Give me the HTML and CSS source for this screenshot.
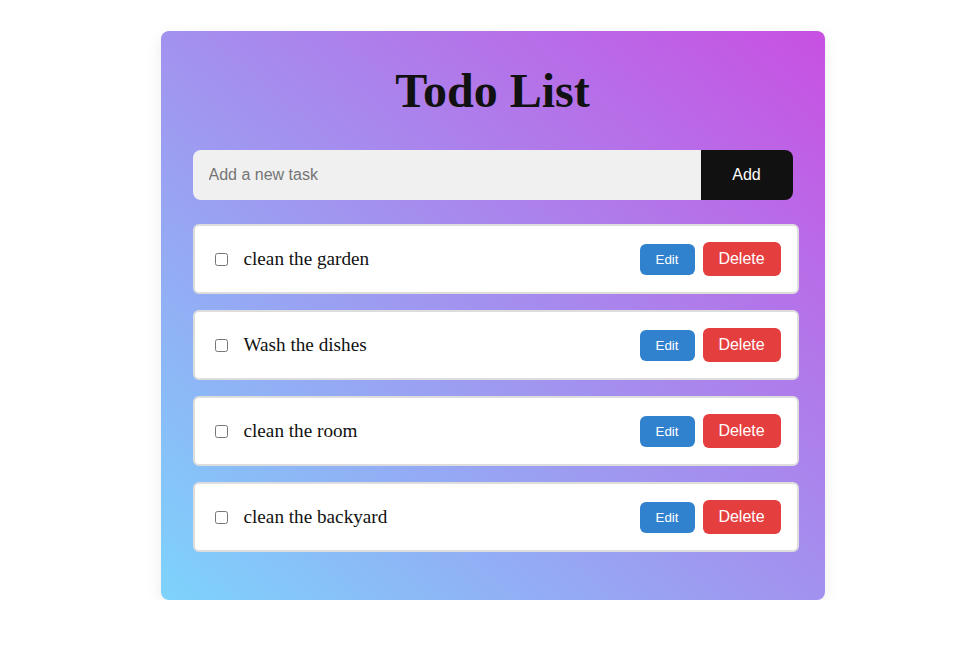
FILE: index.html
```html
<!DOCTYPE html>
<html>
<head>
<meta charset="utf-8">
<title>Todo List</title>
<link rel="stylesheet" href="styles.css">
</head>
<body>
<div class="page">
  <div class="card">
    <h1 class="title">Todo List</h1>
    <div class="add-row">
      <input class="add-input" type="text" placeholder="Add a new task">
      <button class="add-btn">Add</button>
    </div>
    <ul class="list">
      <li class="item">
        <input type="checkbox" class="check">
        <span class="text">clean the garden</span>
        <button class="edit">Edit</button>
        <button class="delete">Delete</button>
      </li>
      <li class="item">
        <input type="checkbox" class="check">
        <span class="text">Wash the dishes</span>
        <button class="edit">Edit</button>
        <button class="delete">Delete</button>
      </li>
      <li class="item">
        <input type="checkbox" class="check">
        <span class="text">clean the room</span>
        <button class="edit">Edit</button>
        <button class="delete">Delete</button>
      </li>
      <li class="item">
        <input type="checkbox" class="check">
        <span class="text">clean the backyard</span>
        <button class="edit">Edit</button>
        <button class="delete">Delete</button>
      </li>
    </ul>
  </div>
</div>
</body>
</html>
```
FILE: styles.css
```css
html, body {
  margin: 0;
  padding: 0;
  background: #ffffff;
}
.page {
  display: flex;
  justify-content: center;
  padding-top: 31px;
  padding-left: 20px;
}
.card {
  box-sizing: border-box;
  width: 664px;
  padding: 32px 32px 32px 32px;
  border-radius: 8px;
  background: linear-gradient(to top right, #7dd3fc, #c850e2);
  box-shadow: 0 4px 16px rgba(0, 0, 0, 0.08);
  font-family: "Liberation Serif", "Times New Roman", serif;
}
.title {
  margin: 0 0 32px 0;
  text-align: center;
  font-size: 48px;
  font-weight: bold;
  color: #111111;
  line-height: 55px;
}
.add-row {
  display: flex;
  width: 600px;
  height: 50px;
  margin-bottom: 24px;
}
.add-input {
  flex: 1;
  box-sizing: border-box;
  height: 50px;
  border: none;
  outline: none;
  background: #f0f0f0;
  border-radius: 8px 0 0 8px;
  padding: 0 16px;
  font-family: "Liberation Sans", Arial, sans-serif;
  font-size: 16px;
  color: #222;
}
.add-input::placeholder {
  color: #757575;
}
.add-btn {
  width: 92px;
  height: 50px;
  border: none;
  background: #111111;
  color: #ffffff;
  border-radius: 0 8px 8px 0;
  font-family: "Liberation Sans", Arial, sans-serif;
  font-size: 16px;
}
.list {
  list-style: none;
  margin: 0;
  padding: 0;
  width: 606px;
}
.item {
  box-sizing: border-box;
  display: flex;
  align-items: center;
  height: 70px;
  padding: 0 16px;
  margin-bottom: 16px;
  background: #ffffff;
  border: 2px solid #dddddd;
  border-radius: 6px;
}
.check {
  width: 13px;
  height: 13px;
  margin: 0 0 0 4px;
}
.text {
  flex: 1;
  margin-left: 16px;
  font-size: 19.2px;
  color: #111111;
}
.edit {
  box-sizing: border-box;
  width: 55px;
  height: 31px;
  border: none;
  border-radius: 6px;
  background: #3182ce;
  color: #ffffff;
  font-family: "Liberation Sans", Arial, sans-serif;
  font-size: 13.33px;
  margin-right: 8px;
}
.delete {
  box-sizing: border-box;
  width: 78px;
  height: 34px;
  border: none;
  border-radius: 6px;
  background: #e53e3e;
  color: #ffffff;
  font-family: "Liberation Sans", Arial, sans-serif;
  font-size: 16px;
}
```
